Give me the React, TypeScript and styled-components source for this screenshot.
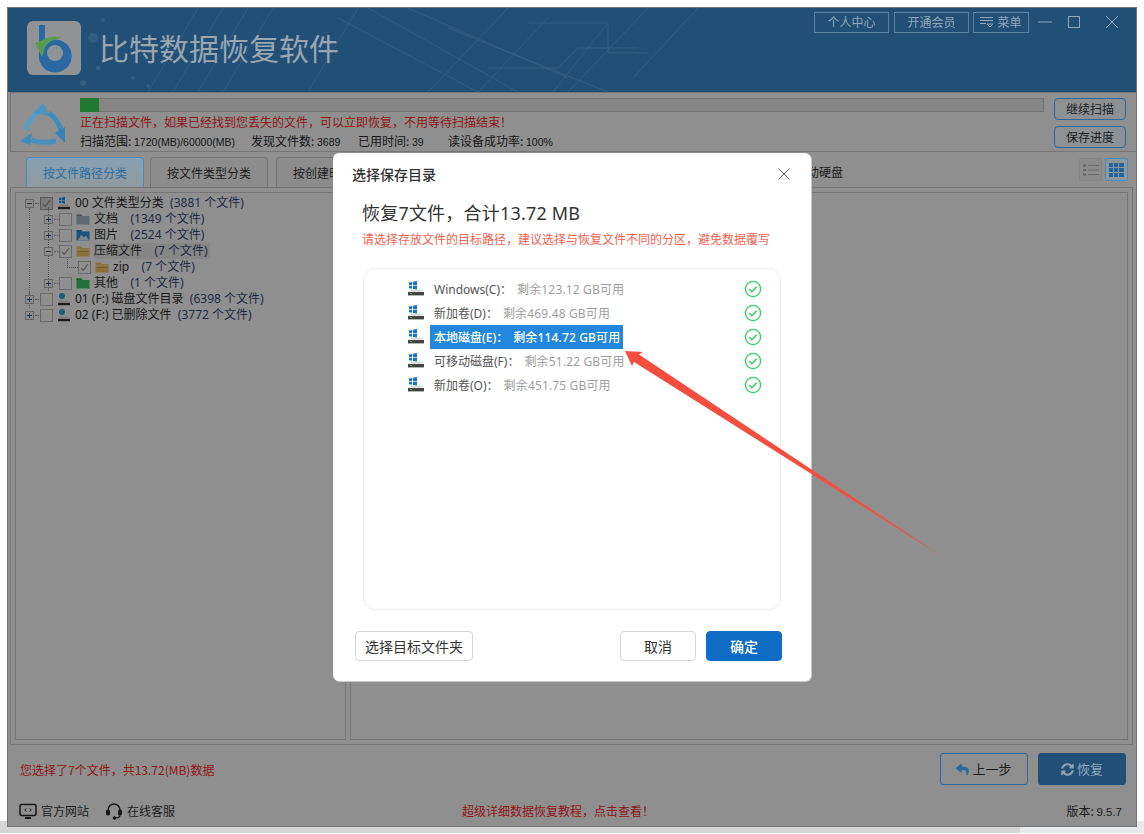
import React from "react";
import styled, { createGlobalStyle } from "styled-components";
import { FaReply, FaSyncAlt } from "react-icons/fa";

/* The window behind the dialog is shaded: every colour of it is 57% of its normal value. */
const d = (hex: string) => {
  const n = parseInt(hex.slice(1), 16);
  const c = (v: number) => Math.round(v * 0.57).toString(16).padStart(2, "0");
  return `#${c((n >> 16) & 255)}${c((n >> 8) & 255)}${c(n & 255)}`;
};

const Global = createGlobalStyle`
  html, body { margin: 0; padding: 0; background: #fff; }
  body { font-family: "Noto Sans", "Noto Sans CJK SC", sans-serif; }
  * { box-sizing: border-box; }
`;

const Page = styled.div`
  position: relative; width: 1144px; height: 834px; padding: 7px 7px 0; overflow: hidden;
  background: linear-gradient(to right, #d5d6d5 1020px, #e9eaec 1020px) left bottom 1px / 100% 12px no-repeat;
`;
const Window = styled.div`
  position: relative; width: 1130px; height: 820px;
`;
const Shell = styled.div`
  width: 1130px; height: 820px; border: 1px solid #767676;
  background: #8f8f8f; display: flex; flex-direction: column; color: #1c1c1c; font-size: 12px;
`;
const Header = styled.header`
  position: relative; height: 84px; flex: none; background: #224f76; overflow: hidden;
  display: flex; align-items: flex-start; padding: 13px 0 0 19px;
`;
const HeaderArt = styled.svg`
  position: absolute; left: 0; top: 0; width: 720px; height: 84px;
`;
const LogoBox = styled.div`
  position: relative; width: 54px; height: 54px; border-radius: 6px; background: #8f9396; flex: none;
`;
const Title = styled.h1`
  position: relative; margin: 6px 0 0 18px; font-size: 30px; line-height: 40px; font-weight: 400; color: #98a6b2;
  font-family: "Noto Sans CJK SC", sans-serif; letter-spacing: 0;
`;
const HeaderRight = styled.div`
  position: relative; margin: -9px 0 0 auto; display: flex; align-items: center; height: 20px;
`;
const TopButton = styled.button<{ $w: number; $gap?: number }>`
  width: ${p => p.$w}px; height: 21px; margin-right: ${p => p.$gap ?? 5}px; padding: 0; border: 1px solid #5b84a4; background: transparent;
  color: #8fa9bd; font: 12px/18px "Noto Sans CJK SC", sans-serif; display: flex; align-items: center; justify-content: center; gap: 3px;
`;
const WinIcon = styled.svg<{ $mr: number }>`
  width: 14px; height: 14px; margin-right: ${p => p.$mr}px; flex: none;
`;

const ScanPanel = styled.section`
  height: 60px; flex: none; margin-left: 2px; border: 1px solid #767676; border-right: 0; padding: 5px 0 0 9px; display: flex;
`;
const ScanIcon = styled.svg` width: 46px; height: 44px; margin: 4px 14px 0 0; flex: none; `;
const ScanMiddle = styled.div` width: 964px; flex: none; `;
const Progress = styled.div`
  height: 14px; background: #868686; border: 1px solid #757575; border-left: 0;
`;
const ProgressFill = styled.div` height: 14px; margin-top: -1px; background: #1f7a30; `;
const RedLine = styled.div`
  color: #8f1515; line-height: 18px; margin-top: 1px; font-family: "Noto Sans CJK SC", sans-serif;
`;
const StatsLine = styled.div`
  display: flex; line-height: 18px; margin-top: 1px; font-size: 12px;
  color: #161616; font-family: "Noto Sans CJK SC", sans-serif;
`;
const Stat = styled.span<{ $w: number }>` width: ${p => p.$w}px; flex: none; `;
const Num = styled.span<{ $size?: number }>` font-family: "Liberation Sans", sans-serif; font-size: ${p => p.$size ?? 10.5}px; `;
const ScanButtons = styled.div`
  margin-left: 10px; display: flex; flex-direction: column; gap: 6px; width: 72px;
`;
const OutlineBtn = styled.button`
  height: 22px; border: 1px solid #2a6a9c; border-radius: 4px; background: #8d9194; padding: 0; color: #1c1c1c;
  font: 12px/20px "Noto Sans CJK SC", sans-serif;
`;

const TabRow = styled.nav`
  height: 35px; flex: none; padding: 5px 8px 0 18px; display: flex; align-items: flex-end;
`;
const Tab = styled.div<{ $active?: boolean; $ml?: number }>`
  width: 118px; height: 30px; margin-left: ${p => p.$ml ?? 0}px; display: flex; align-items: center; justify-content: center;
  border: 1px solid ${p => (p.$active ? "#4c8cbc" : "#767676")}; border-bottom: 0; border-radius: 4px 4px 0 0;
  background: ${p => (p.$active ? "linear-gradient(#86a0b2,#909a9f)" : "#8c8c8c")};
  color: ${p => (p.$active ? "#2c6ea4" : "#1c1c1c")}; font-family: "Noto Sans CJK SC", sans-serif;
`;
const TabLabel = styled.span`
  margin: 0 0 7px 401px; font-family: "Noto Sans CJK SC", sans-serif; line-height: 16px;
`;
const ViewToggles = styled.div` margin: 0 0 6px auto; display: flex; gap: 3px; `;
const ViewToggle = styled.div<{ $active?: boolean }>`
  width: 23px; height: 23px; display: flex; align-items: center; justify-content: center; border-radius: 2px;
  border: 1px solid ${p => (p.$active ? "#4c8cbc" : "#858585")}; background: ${p => (p.$active ? "#8c979e" : "#8b8b8b")};
`;

const TreePanel = styled.section`
  flex: none; height: 558px; margin: 0 3px 0 2px; border: 1px solid #767676; padding: 4px; display: flex; gap: 4px;
`;
const TreePane = styled.div`
  width: 331px; flex: none; border: 1px solid #767676; padding-top: 2px;
`;
const RightPane = styled.div` flex: 1; border: 1px solid #767676; `;
const TreeRow = styled.div<{ $indent: number }>`
  position: relative; height: 16px; display: flex; align-items: center; padding-left: ${p => p.$indent}px;
  white-space: nowrap; font-size: 12px; color: #181818; line-height: 16px;
`;
const Guide = styled.span<{ $x: number; $top: number; $h: number }>`
  position: absolute; left: ${p => p.$x}px; top: ${p => p.$top}px; height: ${p => p.$h}px; border-left: 1px dotted #555;
`;
const Expander = styled.span`
  position: relative; width: 9px; height: 9px; border: 1px solid #666; background: #8c8c8c; flex: none; margin-right: 6px;
  &::after { content: ""; position: absolute; left: 9px; top: 3px; width: 6px; border-top: 1px dotted #555; }
`;
const Spacer = styled.span<{ $w: number }>`
  position: relative; width: ${p => p.$w}px; height: 9px; flex: none;
  border-left: 1px dotted #555; border-bottom: 1px dotted #555; margin-top: -8px;
`;
const Check = styled.span<{ $strong?: boolean }>`
  width: 13px; height: 13px; flex: none; border: 1px solid ${p => (p.$strong ? "#5c5c5c" : "#6a6a6a")};
  background: ${p => (p.$strong ? "#7a7a7a" : "#8f8f8f")}; margin-right: 4px; display: flex; align-items: center; justify-content: center;
`;
const RowIcon = styled.svg` width: 14px; height: 14px; flex: none; margin-right: 4px; `;
const TreeText = styled.span<{ $sel?: boolean }>`
  background: ${p => (p.$sel ? "#868686" : "transparent")}; padding-right: 2px; display: flex; height: 16px; align-items: center;
  white-space: pre; font-family: "Noto Sans", "Noto Sans CJK SC", sans-serif;
`;
const Count = styled.span` color: #1d2a44; white-space: pre; `;

const StatusBar = styled.div`
  height: 50px; flex: none; padding: 8px 10px 0 12px; display: flex; align-items: flex-start; gap: 10px;
`;
const SelInfo = styled.span`
  color: #8f1515; margin: 8px auto 0 0; line-height: 18px; font-family: "Noto Sans CJK SC", sans-serif;
`;
const StepBtn = styled.button<{ $primary?: boolean }>`
  width: 88px; height: 32px; border-radius: 3px; border: 1px solid ${p => (p.$primary ? "#224f76" : "#2a6a9c")}; padding: 0;
  background: ${p => (p.$primary ? "#224f76" : "#8f8f8f")}; color: ${p => (p.$primary ? "#8fa9bd" : "#1c1c1c")};
  font: 13px/30px "Noto Sans CJK SC", sans-serif; display: flex; align-items: center; justify-content: center; gap: 3px;
  svg { color: ${p => (p.$primary ? "#8fa2b2" : "#2a6a9c")}; font-size: 13px; }
`;

const FootBar = styled.footer`
  height: 30px; flex: none; display: flex; align-items: center; padding: 2px 14px 0 11px; font-family: "Noto Sans CJK SC", sans-serif; line-height: 16px;
`;
const FootLink = styled.span<{ $w: number }>` width: ${p => p.$w}px; flex: none; display: flex; align-items: center; gap: 4px; `;
const FootIcon = styled.svg` width: 18px; height: 18px; flex: none; `;
const Promo = styled.span` color: #8f1515; margin-left: 277px; font-size: 12px; `;
const Version = styled.span` margin-left: auto; font-size: 12px; `;

const Modal = styled.div`
  position: absolute; left: 326px; top: 146px; width: 478px; height: 528px; background: #fff; border-radius: 6px;
  box-shadow: 1px 1px 0 #c8c8c8;
  display: flex; flex-direction: column;
  font-family: "Noto Sans", "Noto Sans CJK SC", sans-serif; color: #333;
`;
const ModalTitleBar = styled.div`
  height: 41px; flex: none; padding: 0 21px 0 19px; display: flex; align-items: center; justify-content: space-between;
  font-size: 14px; font-weight: 500; color: #333;
`;
const CloseIcon = styled.svg` width: 12px; height: 12px; `;
const ModalHeading = styled.h2`
  margin: 7px 0 0 29px; font-size: 18px; line-height: 24px; font-weight: 400; color: #333; letter-spacing: .2px;
`;
const ModalHint = styled.p`
  margin: 7px 0 0 29px; font-size: 12px; line-height: 16px; color: #f4604f; white-space: nowrap;
`;
const DriveList = styled.div`
  margin: 20px 0 0 30px; width: 418px; height: 342px; border: 1px solid #eeeeee; border-radius: 12px; padding: 8px 18px 0 43px; flex: none;
`;
const DriveRow = styled.div` height: 24px; display: flex; align-items: center; `;
const DriveIcon = styled.svg` width: 18px; height: 18px; margin-right: 5px; flex: none; `;
const DriveLabel = styled.div<{ $sel?: boolean }>`
  height: 24px; padding: 0 ${p => (p.$sel ? 3 : 4)}px 0 4px; display: flex; align-items: center; white-space: pre; font-size: 12px;
  background: ${p => (p.$sel ? "#2288dd" : "transparent")}; color: ${p => (p.$sel ? "#fff" : "#555")};
  font-weight: ${p => (p.$sel ? 500 : 400)};
`;
const DriveFree = styled.span<{ $sel?: boolean }>`
  margin-left: 5px; letter-spacing: .15px; color: ${p => (p.$sel ? "#fff" : "#a0a0a0")};
`;
const OkIcon = styled.svg` width: 18px; height: 18px; margin-left: auto; flex: none; `;
const ModalActions = styled.div`
  margin-top: 21px; padding: 0 29px 0 22px; display: flex; gap: 10px;
`;
const ModalBtn = styled.button<{ $primary?: boolean; $w: number; $push?: boolean }>`
  width: ${p => p.$w}px; height: 30px; border-radius: 4px; padding: 0; margin-left: ${p => (p.$push ? "auto" : 0)};
  border: 1px solid ${p => (p.$primary ? "#0f6cc4" : "#d6d6d6")};
  background: ${p => (p.$primary ? "#0f6cc4" : "#fff")}; color: ${p => (p.$primary ? "#fff" : "#333")};
  font: ${p => (p.$primary ? 500 : 400)} 14px/28px "Noto Sans CJK SC", sans-serif;
`;
const Arrow = styled.svg` position: absolute; left: 0; top: 0; width: 1144px; height: 834px; pointer-events: none; `;

const Tick = () => (
  <svg width="9" height="9" viewBox="0 0 9 9"><path d="M1 5l2.2 2.4L8 1.2" fill="none" stroke="#555" strokeWidth="1.1" /></svg>
);
const Minus = () => (
  <svg width="7" height="7" viewBox="0 0 7 7" style={{ display: "block" }}><path d="M1 3.5h5" stroke="#333" /></svg>
);
const Plus = () => (
  <svg width="7" height="7" viewBox="0 0 7 7" style={{ display: "block" }}><path d="M1 3.5h5M3.5 1v5" stroke="#24344c" /></svg>
);
const DiskBase = () => (
  <>
    <path d="M1 10l2-1.5h8L13 10v3H1z" fill={d("#d9d9d9")} />
    <rect x="1" y="11" width="12" height="2.2" fill="#1c1c1c" />
  </>
);
const WinDisk = () => (
  <RowIcon viewBox="0 0 14 14">
    <path d="M2 2l2.4-.4V4H2zM5 1.5L8 1v3H5zM2 4.7h2.4V7L2 6.7zM5 4.7h3v2.8L5 7z" fill={d("#1c8fe0")} />
    <DiskBase />
  </RowIcon>
);
const PlainDisk = () => (
  <RowIcon viewBox="0 0 14 14">
    <circle cx="5" cy="4" r="3" fill={d("#3aa4c8")} />
    <DiskBase />
  </RowIcon>
);
const Folder = ({ color, tab }: { color: string; tab: string }) => (
  <RowIcon viewBox="0 0 14 14">
    <path d="M0.5 2.5h5l1 1.5h7v8.5H.5z" fill={d(color)} />
    <path d="M0.5 2.5h5l1 1.5H.5z" fill={d(tab)} />
  </RowIcon>
);
const OpenFolder = () => (
  <RowIcon viewBox="0 0 14 14">
    <path d="M.5 2.5h5l1 1.5h7v8.5H.5z" fill={d("#f2c468")} />
    <path d="M2 7h11" stroke={d("#b68a32")} strokeWidth="1" />
    <path d="M.5 6h13" stroke={d("#fbe6b4")} strokeWidth="1" />
  </RowIcon>
);
const PictureFolder = () => (
  <RowIcon viewBox="0 0 14 14">
    <path d="M.5 2h5l1 1.5h7v9H.5z" fill={d("#2f8fd8")} />
    <path d="M1.5 12.5l4-6 2.5 3 2-2 3 5z" fill={d("#d8eaf6")} />
  </RowIcon>
);

const Drive = () => (
  <DriveIcon viewBox="0 0 18 18">
    <path d="M2 2.4l3-.5v3H2zM6 1.7l4-.7v3.9H6zM2 5.7h3v3L2 8.3zM6 5.7h4v3.8L6 9z" fill="#1573d6" />
    <path d="M2 11.5l.6-1.4h12.8l.6 1.4z" fill="#d5d5d5" />
    <rect x="1" y="12" width="16" height="3.4" fill="#444" />
    <rect x="3" y="13" width="2" height="1" fill="#3fd06a" />
  </DriveIcon>
);
const Ok = () => (
  <OkIcon viewBox="0 0 18 18">
    <circle cx="9" cy="9" r="7.6" fill="none" stroke="#32d25a" strokeWidth="1.3" />
    <path d="M5.3 9.2l2.6 2.6 4.8-5" fill="none" stroke="#32d25a" strokeWidth="1.5" />
  </OkIcon>
);

const drives = [
  { name: "Windows(C)：", free: "剩余123.12 GB可用" },
  { name: "新加卷(D)：", free: "剩余469.48 GB可用" },
  { name: "本地磁盘(E)：", free: "剩余114.72 GB可用", sel: true },
  { name: "可移动磁盘(F)：", free: "剩余51.22 GB可用" },
  { name: "新加卷(O)：", free: "剩余451.75 GB可用" },
];

export default function App() {
  return (
    <Page>
      <Global />
      <Window>
        <Shell>
          <Header>
            <HeaderArt viewBox="0 0 720 84" fill="none">
              <g stroke="#6d93b0" strokeWidth=".7" opacity=".3">
                <path d="M140 84L190 0M165 84L215 0M190 84L240 0M215 84L265 0M300 84L350 0" />
                <path d="M330 10L470 84M360 0L510 84M400 0L560 70M440 20L600 84" />
                <path d="M500 0L420 84M540 10L470 84M600 15L545 84M640 0L560 84M690 0L625 70" />
                <path d="M480 60h70l20-20h60M520 15h80v30h40" />
              </g>
              <g fill="#6d93b0" opacity=".22">
                <circle cx="85" cy="30" r="5" /><circle cx="95" cy="12" r="2" /><circle cx="75" cy="75" r="3" /><circle cx="90" cy="60" r="2.5" /><circle cx="125" cy="70" r="2" /><circle cx="140" cy="78" r="2" />
              </g>
            </HeaderArt>
            <LogoBox>
              <svg width="54" height="54" viewBox="0 0 54 54">
                <path d="M12 4h6v18a16.5 16.5 0 1 1-6 10z" fill="#2a68a2" />
                <circle cx="28" cy="32" r="8" fill="#8f9396" />
                <path d="M8 22l8-3c6-4 14-4 20-2-7 0-14 3-18 9l-3 10z" fill="#5a9a50" />
              </svg>
            </LogoBox>
            <Title>比特数据恢复软件</Title>
            <HeaderRight>
              <TopButton $w={75}>个人中心</TopButton>
              <TopButton $w={75} $gap={4}>开通会员</TopButton>
              <TopButton $w={56} $gap={9}>
                <svg width="14" height="12" viewBox="0 0 14 12" fill="none" stroke="#8fa9bd"><path d="M0 1.5h13M0 4.5h13M0 7.5h6M7 8h6l-3 3z" /></svg>
                菜单
              </TopButton>
              <WinIcon $mr={15} viewBox="0 0 14 14"><path d="M0 7h14" stroke="#8fa9bd" /></WinIcon>
              <WinIcon $mr={24} viewBox="0 0 14 14"><rect x="1.5" y="1.5" width="11" height="11" fill="none" stroke="#8fa9bd" /></WinIcon>
              <WinIcon $mr={17} viewBox="0 0 14 14"><path d="M1 1l12 12M13 1L1 13" stroke="#8fa9bd" /></WinIcon>
            </HeaderRight>
          </Header>

          <ScanPanel>
            <ScanIcon viewBox="0 0 46 44" fill="none">
              <path d="M6 28C8 20 12 15 18 10" stroke="#5a9cc4" strokeWidth="5" />
              <path d="M13 11L23 1l7 13z" fill="#4d94c0" />
              <path d="M29 11c7 5 11 12 13 20" stroke="#3f8cbc" strokeWidth="5" />
              <path d="M35 31l10 10V25z" fill="#3584b6" />
              <path d="M11 38c8 3 16 3 25 1" stroke="#4a90bc" strokeWidth="5" />
              <path d="M0 39l12-8-2 12z" fill="#3f8cbc" />
            </ScanIcon>
            <ScanMiddle>
              <Progress><ProgressFill style={{ width: `${(19 / 964) * 100}%` }} /></Progress>
              <RedLine>正在扫描文件，如果已经找到您丢失的文件，可以立即恢复，不用等待扫描结束！</RedLine>
              <StatsLine>
                <Stat $w={171}>扫描范围: <Num>1720(MB)/60000(MB)</Num></Stat>
                <Stat $w={107}>发现文件数: <Num>3689</Num></Stat>
                <Stat $w={90}>已用时间: <Num>39</Num></Stat>
                <Stat $w={140}>读设备成功率: <Num>100%</Num></Stat>
              </StatsLine>
            </ScanMiddle>
            <ScanButtons>
              <OutlineBtn>继续扫描</OutlineBtn>
              <OutlineBtn>保存进度</OutlineBtn>
            </ScanButtons>
          </ScanPanel>

          <TabRow>
            <Tab $active>按文件路径分类</Tab>
            <Tab $ml={6}>按文件类型分类</Tab>
            <Tab $ml={8}>按创建时间分类</Tab>
            <TabLabel>移动硬盘</TabLabel>
            <ViewToggles>
              <ViewToggle>
                <svg width="16" height="14" viewBox="0 0 16 14"><path d="M0 1.5h3v2H0zM0 6h3v2H0zM0 10.5h3v2H0z" fill="#666" /><path d="M5 2.5h11M5 7h11M5 11.5h11" stroke="#6c6c6c" /></svg>
              </ViewToggle>
              <ViewToggle $active>
                <svg width="15" height="14" viewBox="0 0 15 14" fill="#23649c"><path d="M0 0h4v4H0zM5 0h4v4H5zM10 0h5v4h-5zM0 5h4v4H0zM5 5h4v4H5zM10 5h5v4h-5zM0 10h4v4H0zM5 10h4v4H5zM10 10h5v4h-5z" /></svg>
              </ViewToggle>
            </ViewToggles>
          </TabRow>

          <TreePanel>
            <TreePane>
              <TreeRow $indent={9}>
                <Guide $x={13} $top={13} $h={100} />
                <Guide $x={32} $top={12} $h={84} />
                <Expander><Minus /></Expander>
                <Check $strong><Tick /></Check><WinDisk />
                <TreeText>00 文件类型分类  <Count>(3881 个文件)</Count></TreeText>
              </TreeRow>
              <TreeRow $indent={28}>
                <Expander><Plus /></Expander><Check /><Folder color="#a8b8c8" tab="#8898a8" />
                <TreeText>文档    <Count>(1349 个文件)</Count></TreeText>
              </TreeRow>
              <TreeRow $indent={28}>
                <Expander><Plus /></Expander><Check /><PictureFolder />
                <TreeText>图片    <Count>(2524 个文件)</Count></TreeText>
              </TreeRow>
              <TreeRow $indent={28}>
                <Expander><Minus /></Expander><Check><Tick /></Check><OpenFolder />
                <TreeText $sel>压缩文件    <Count>(7 个文件)</Count></TreeText>
              </TreeRow>
              <TreeRow $indent={51}>
                <Spacer $w={11} /><Check><Tick /></Check><OpenFolder />
                <TreeText>zip    <Count>(7 个文件)</Count></TreeText>
              </TreeRow>
              <TreeRow $indent={28}>
                <Expander><Plus /></Expander><Check /><Folder color="#3fc46a" tab="#2ca855" />
                <TreeText>其他    <Count>(1 个文件)</Count></TreeText>
              </TreeRow>
              <TreeRow $indent={9}>
                <Guide $x={13} $top={0} $h={4} />
                <Expander><Plus /></Expander><Check /><PlainDisk />
                <TreeText>01 (F:) 磁盘文件目录  <Count>(6398 个文件)</Count></TreeText>
              </TreeRow>
              <TreeRow $indent={9}>
                <Expander><Plus /></Expander><Check /><PlainDisk />
                <TreeText>02 (F:) 已删除文件  <Count>(3772 个文件)</Count></TreeText>
              </TreeRow>
            </TreePane>
            <RightPane />
          </TreePanel>

          <StatusBar>
            <SelInfo>您选择了7个文件，共13.72(MB)数据</SelInfo>
            <StepBtn><FaReply />上一步</StepBtn>
            <StepBtn $primary><FaSyncAlt />恢复</StepBtn>
          </StatusBar>

          <FootBar>
            <FootLink $w={86}>
              <FootIcon viewBox="0 0 18 18" fill="none" stroke="#161616">
                <rect x="1" y="2.5" width="16" height="11" rx="1.5" strokeWidth="1.5" />
                <path d="M6 16h6" strokeWidth="2" />
                <path d="M7.5 6.5L5.8 8l1.7 1.5M10.5 6.5L12.2 8l-1.7 1.5" strokeWidth="1" />
              </FootIcon>
              官方网站
            </FootLink>
            <FootLink $w={80}>
              <FootIcon viewBox="0 0 18 18" fill="none" stroke="#161616">
                <path d="M3 10V8a6 6 0 0 1 12 0v2" strokeWidth="1.5" />
                <rect x="1.5" y="8" width="3" height="5" rx="1.2" fill="#161616" />
                <rect x="13.5" y="8" width="3" height="5" rx="1.2" fill="#161616" />
                <path d="M15 13c0 2-2 3-4.5 3" strokeWidth="1.2" />
                <circle cx="9.5" cy="16" r="1.3" fill="#161616" />
              </FootIcon>
              在线客服
            </FootLink>
            <Promo>超级详细数据恢复教程，点击查看！</Promo>
            <Version>版本: <Num $size={11.5}>9.5.7</Num></Version>
          </FootBar>
        </Shell>

        <Modal>
          <ModalTitleBar>
            选择保存目录
            <CloseIcon viewBox="0 0 12 12"><path d="M.5.5l11 11M11.5.5l-11 11" stroke="#666" /></CloseIcon>
          </ModalTitleBar>
          <ModalHeading>恢复7文件，合计13.72 MB</ModalHeading>
          <ModalHint>请选择存放文件的目标路径，建议选择与恢复文件不同的分区，避免数据覆写</ModalHint>
          <DriveList>
            {drives.map(x => (
              <DriveRow key={x.name}>
                <Drive />
                <DriveLabel $sel={x.sel}>
                  {x.name}
                  <DriveFree $sel={x.sel}>{x.free}</DriveFree>
                </DriveLabel>
                <Ok />
              </DriveRow>
            ))}
          </DriveList>
          <ModalActions>
            <ModalBtn $w={118}>选择目标文件夹</ModalBtn>
            <ModalBtn $w={76} $push>取消</ModalBtn>
            <ModalBtn $w={76} $primary>确定</ModalBtn>
          </ModalActions>
        </Modal>
      </Window>
      <Arrow viewBox="0 0 1144 834">
        <path d="M625 351l18 1-4 2.5L943 557 634 362l-2 4z" fill="#f44e3f" />
      </Arrow>
    </Page>
  );
}
